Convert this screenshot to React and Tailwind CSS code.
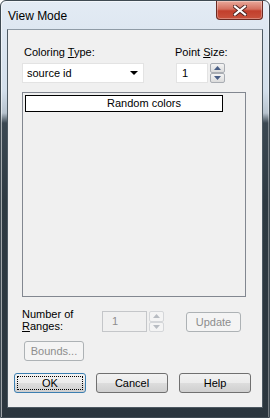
import React from "react";

const font = { fontFamily: '"Liberation Sans", Arial, sans-serif' };

const Spin = ({ disabled, h = 10 }) => {
  const arrow = disabled ? "#b8bcc2" : "#4a5f86";
  const box = disabled
    ? "border-[#d4d6d9] bg-[#f4f4f4]"
    : "border-[#a9adb3] bg-gradient-to-b from-[#f4f4f4] to-[#dcdcdc]";
  return (
    <div className="flex flex-col">
      <div className={`w-[15px] border rounded-[2px] flex items-center justify-center ${box}`} style={{ height: h + 1 }}>
        <svg width="7" height="4" viewBox="0 0 7 4">
          <path d="M0 4 L3.5 0 L7 4 Z" fill={arrow} />
        </svg>
      </div>
      <div className={`w-[15px] border rounded-[2px] flex items-center justify-center ${box}`} style={{ height: h + 1 }}>
        <svg width="7" height="4" viewBox="0 0 7 4">
          <path d="M0 0 L7 0 L3.5 4 Z" fill={arrow} />
        </svg>
      </div>
    </div>
  );
};

const Button = ({ children, width, focused, disabled, className = "" }) => {
  if (disabled) {
    return (
      <div
        className={`h-[20px] rounded-[3px] border border-[#adb2b5] bg-[#f4f4f4] text-[#8d8d8d] flex items-center justify-center ${className}`}
        style={{ width }}
      >
        {children}
      </div>
    );
  }
  return (
    <div
      className={`h-[20px] rounded-[3px] border ${focused ? "border-[#3c7fb1]" : "border-[#707070]"} bg-[linear-gradient(#f2f2f2_0%,#ebebeb_50%,#dddddd_51%,#cfcfcf_100%)] text-black flex items-center justify-center p-[2px] ${className}`}
      style={{ width }}
    >
      <div
        className={`w-full h-full flex items-center justify-center ${focused ? "border border-dotted border-black" : ""}`}
      >
        {children}
      </div>
    </div>
  );
};

export default function App() {
  return (
    <div
      className="w-[270px] h-[418px] border border-[#3f4a52] rounded-t-[6px] bg-[linear-gradient(180deg,#e3ebf4_0px,#d3dfeb_90px,#b7c3ce_112px,#3b4852_122px,#2e3a42_200px,#2b363e_100%)] shadow-[inset_1px_1px_0_rgba(255,255,255,0.55),inset_-1px_0_0_rgba(255,255,255,0.35)] flex flex-col text-[11px] text-black"
      style={font}
    >
      {/* title bar */}
      <div className="h-[28px] flex items-start justify-between">
        <div className="text-[12px] leading-[14px] pl-[7px] pt-[8px]">View Mode</div>
        <div className="mr-[6px] w-[47px] h-[19px] rounded-b-[4px] border border-t-0 border-[#6b2a22] bg-[linear-gradient(180deg,#e9a99b_0%,#d4705f_45%,#c23f2c_55%,#c9523d_100%)] shadow-[inset_0_0_0_1px_rgba(255,255,255,0.3)] flex items-center justify-center">
          <svg width="14" height="11" viewBox="0 0 14 11">
            <path d="M2 1.5 L12 9.5 M12 1.5 L2 9.5" stroke="#4a2220" strokeWidth="4" strokeLinecap="square" />
            <path d="M2 1.5 L12 9.5 M12 1.5 L2 9.5" stroke="#ffffff" strokeWidth="2.2" strokeLinecap="square" />
          </svg>
        </div>
      </div>

      {/* client area */}
      <div className="ml-[6px] w-[256px] h-[379px] border border-[#4d5962] border-t-[#8f9ba6] bg-[#f0f0f0] flex flex-col pl-[14px] pt-[16px]">
        {/* coloring type / point size */}
        <div className="flex">
          <div className="w-[153px] flex flex-col">
            <div className="h-[13px] leading-[13px] ml-[2px]">
              Coloring <span className="underline">T</span>ype:
            </div>
            <div className="mt-[4px] w-[122px] h-[20px] bg-white border border-[#e3e3e3] flex items-center justify-between pl-[4px] pr-[5px]">
              <span>source id</span>
              <svg width="8" height="4" viewBox="0 0 8 4">
                <path d="M0 0 L8 0 L4 4 Z" fill="#000" />
              </svg>
            </div>
          </div>
          <div className="flex flex-col">
            <div className="h-[13px] leading-[13px]">
              Point <span className="underline">S</span>ize:
            </div>
            <div className="mt-[4px] flex gap-[2px] ml-[1px]">
              <div className="w-[32px] h-[20px] bg-white border border-[#e3e3e3] flex items-center pl-[5px]">1</div>
              <Spin h={9} />
            </div>
          </div>
        </div>

        {/* list */}
        <div className="mt-[9px] w-[224px] h-[205px] border border-[#828790] bg-[#f0f0f0] p-[2px]">
          <div className="w-[198px] h-[17px] bg-white border border-black leading-[15px] pl-[81px]">Random colors</div>
        </div>

        {/* number of ranges */}
        <div className="mt-[10px] flex items-start">
          <div className="w-[80px] leading-[12px] pt-[1px]">
            Number of
            <br />
            <span className="underline">R</span>anges:
          </div>
          <div className="mt-[4px] flex gap-[2px]">
            <div className="w-[45px] h-[21px] bg-[#f0f0f0] border border-[#c4c6c9] text-[#8d8d8d] flex items-center pl-[9px]">1</div>
            <Spin disabled h={9.5} />
          </div>
          <Button disabled width={55} className="ml-[22px] mt-[5px]">Update</Button>
        </div>

        <Button disabled width={60} className="ml-[2px] mt-[9px]">Bounds...</Button>

        {/* dialog buttons */}
        <div className="mt-[12px] -ml-[8px] flex">
          <Button focused width={72}>OK</Button>
          <Button width={72} className="ml-[10px]">Cancel</Button>
          <Button width={72} className="ml-[11px]">Help</Button>
        </div>
      </div>
    </div>
  );
}
